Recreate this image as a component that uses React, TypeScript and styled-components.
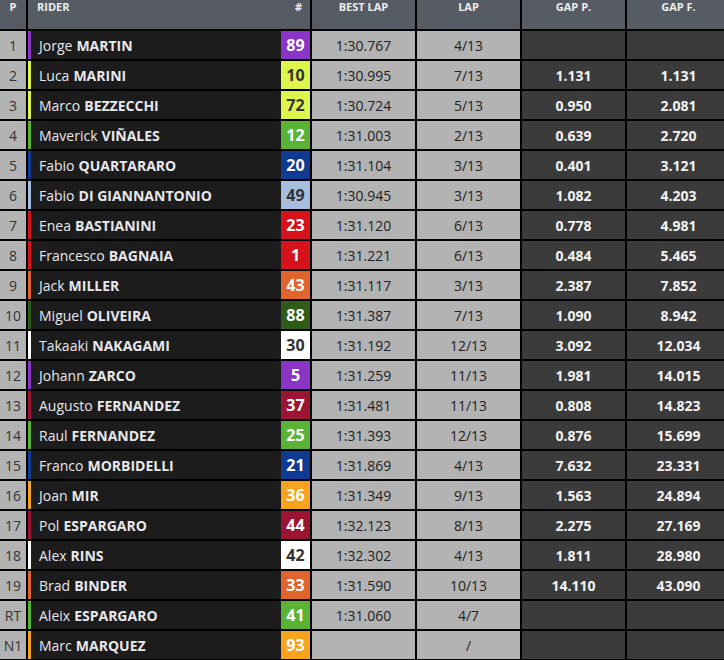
import React from "react";
import styled, { createGlobalStyle } from "styled-components";

const GlobalStyle = createGlobalStyle`
  html, body {
    margin: 0;
    padding: 0;
    background: #000;
    overflow: hidden;
  }
`;

const Board = styled.div`
  display: flex;
  flex-direction: column;
  gap: 2px;
  width: 730px;
  background: #000;
  font-family: "Open Sans", "Noto Sans", sans-serif;
`;

const Row = styled.div<{ $h: number }>`
  display: grid;
  grid-template-columns: 26px 282px 103px 103px 103px 103px;
  column-gap: 2px;
  height: ${(p) => p.$h}px;
`;

const HeadCell = styled.div`
  background: #575c64;
  color: #eceef0;
  font-size: 11px;
  font-weight: 700;
  line-height: 13px;
  display: flex;
  justify-content: center;
  padding-top: 0;
  overflow: hidden;
`;

const HeadRider = styled(HeadCell)`
  justify-content: space-between;
  padding: 0 8px 0 9px;
`;

const PosCell = styled.div`
  background: #b3b3b3;
  color: #333;
  font-size: 14px;
  display: flex;
  align-items: center;
  justify-content: center;
`;

const RiderCell = styled.div<{ $stripe: string }>`
  background: #1c1c1c;
  border-left: 3px solid ${(p) => p.$stripe};
  display: flex;
  align-items: stretch;
`;

const Name = styled.div`
  flex: 1;
  color: #e8e8ec;
  font-size: 14px;
  padding-left: 8px;
  display: flex;
  align-items: center;
  white-space: nowrap;

  b {
    font-weight: 700;
    margin-left: 4px;
  }
`;

const Num = styled.div<{ $bg: string; $fg: string }>`
  width: 29px;
  background: ${(p) => p.$bg};
  color: ${(p) => p.$fg};
  font-size: 16px;
  font-weight: 700;
  display: flex;
  align-items: center;
  justify-content: center;
`;

const LapCell = styled.div`
  background: #b3b3b3;
  color: #222;
  font-size: 14px;
  display: flex;
  align-items: center;
  justify-content: center;
`;

const GapCell = styled.div`
  background: #3b3b3b;
  color: #f2f2f2;
  font-size: 14px;
  font-weight: 700;
  display: flex;
  align-items: center;
  justify-content: center;
`;

const PURPLE = "#8a35c6";
const YELLOW = "#def54c";
const GREEN = "#5bb336";
const BLUE = "#0f3b93";
const LBLUE = "#a7bde0";
const RED = "#d6121b";
const ORANGE = "#e0642b";
const DGREEN = "#2f5d18";
const WHITE = "#ffffff";
const MAROON = "#9b1532";
const AMBER = "#f8a31e";

type Rider = {
  pos: string;
  first: string;
  last: string;
  num: string;
  color: string;
  dark?: boolean;
  best: string;
  lap: string;
  gapP: string;
  gapF: string;
};

const riders: Rider[] = [
  { pos: "1", first: "Jorge", last: "MARTIN", num: "89", color: PURPLE, best: "1:30.767", lap: "4/13", gapP: "", gapF: "" },
  { pos: "2", first: "Luca", last: "MARINI", num: "10", color: YELLOW, dark: true, best: "1:30.995", lap: "7/13", gapP: "1.131", gapF: "1.131" },
  { pos: "3", first: "Marco", last: "BEZZECCHI", num: "72", color: YELLOW, dark: true, best: "1:30.724", lap: "5/13", gapP: "0.950", gapF: "2.081" },
  { pos: "4", first: "Maverick", last: "VIÑALES", num: "12", color: GREEN, best: "1:31.003", lap: "2/13", gapP: "0.639", gapF: "2.720" },
  { pos: "5", first: "Fabio", last: "QUARTARARO", num: "20", color: BLUE, best: "1:31.104", lap: "3/13", gapP: "0.401", gapF: "3.121" },
  { pos: "6", first: "Fabio", last: "DI GIANNANTONIO", num: "49", color: LBLUE, dark: true, best: "1:30.945", lap: "3/13", gapP: "1.082", gapF: "4.203" },
  { pos: "7", first: "Enea", last: "BASTIANINI", num: "23", color: RED, best: "1:31.120", lap: "6/13", gapP: "0.778", gapF: "4.981" },
  { pos: "8", first: "Francesco", last: "BAGNAIA", num: "1", color: RED, best: "1:31.221", lap: "6/13", gapP: "0.484", gapF: "5.465" },
  { pos: "9", first: "Jack", last: "MILLER", num: "43", color: ORANGE, best: "1:31.117", lap: "3/13", gapP: "2.387", gapF: "7.852" },
  { pos: "10", first: "Miguel", last: "OLIVEIRA", num: "88", color: DGREEN, best: "1:31.387", lap: "7/13", gapP: "1.090", gapF: "8.942" },
  { pos: "11", first: "Takaaki", last: "NAKAGAMI", num: "30", color: WHITE, dark: true, best: "1:31.192", lap: "12/13", gapP: "3.092", gapF: "12.034" },
  { pos: "12", first: "Johann", last: "ZARCO", num: "5", color: PURPLE, best: "1:31.259", lap: "11/13", gapP: "1.981", gapF: "14.015" },
  { pos: "13", first: "Augusto", last: "FERNANDEZ", num: "37", color: MAROON, best: "1:31.481", lap: "11/13", gapP: "0.808", gapF: "14.823" },
  { pos: "14", first: "Raul", last: "FERNANDEZ", num: "25", color: GREEN, best: "1:31.393", lap: "12/13", gapP: "0.876", gapF: "15.699" },
  { pos: "15", first: "Franco", last: "MORBIDELLI", num: "21", color: BLUE, best: "1:31.869", lap: "4/13", gapP: "7.632", gapF: "23.331" },
  { pos: "16", first: "Joan", last: "MIR", num: "36", color: AMBER, best: "1:31.349", lap: "9/13", gapP: "1.563", gapF: "24.894" },
  { pos: "17", first: "Pol", last: "ESPARGARO", num: "44", color: MAROON, best: "1:32.123", lap: "8/13", gapP: "2.275", gapF: "27.169" },
  { pos: "18", first: "Alex", last: "RINS", num: "42", color: WHITE, dark: true, best: "1:32.302", lap: "4/13", gapP: "1.811", gapF: "28.980" },
  { pos: "19", first: "Brad", last: "BINDER", num: "33", color: ORANGE, best: "1:31.590", lap: "10/13", gapP: "14.110", gapF: "43.090" },
  { pos: "RT", first: "Aleix", last: "ESPARGARO", num: "41", color: GREEN, best: "1:31.060", lap: "4/7", gapP: "", gapF: "" },
  { pos: "N1", first: "Marc", last: "MARQUEZ", num: "93", color: AMBER, best: "", lap: "/", gapP: "", gapF: "" },
];

export default function App() {
  return (
    <>
      <GlobalStyle />
      <Board>
        <Row $h={29}>
          <HeadCell>P</HeadCell>
          <HeadRider>
            <span>RIDER</span>
            <span>#</span>
          </HeadRider>
          <HeadCell>BEST LAP</HeadCell>
          <HeadCell>LAP</HeadCell>
          <HeadCell>GAP P.</HeadCell>
          <HeadCell>GAP F.</HeadCell>
        </Row>
        {riders.map((r) => (
          <Row $h={28} key={r.pos}>
            <PosCell>{r.pos}</PosCell>
            <RiderCell $stripe={r.color}>
              <Name>
                {r.first}
                <b>{r.last}</b>
              </Name>
              <Num $bg={r.color} $fg={r.dark ? "#333" : "#fff"}>
                {r.num}
              </Num>
            </RiderCell>
            <LapCell>{r.best}</LapCell>
            <LapCell>{r.lap}</LapCell>
            <GapCell>{r.gapP}</GapCell>
            <GapCell>{r.gapF}</GapCell>
          </Row>
        ))}
      </Board>
    </>
  );
}
